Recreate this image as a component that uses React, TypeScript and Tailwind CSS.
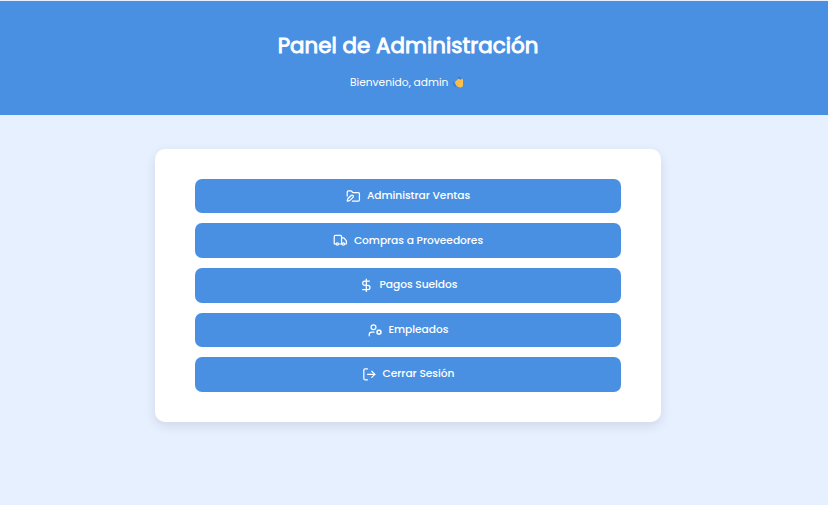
import { DollarSign, FolderPen, LogOut, Truck, UserCog, type LucideIcon } from 'lucide-react';

type Action = { label: string; icon: LucideIcon };

const actions: Action[] = [
  { label: 'Administrar Ventas', icon: FolderPen },
  { label: 'Compras a Proveedores', icon: Truck },
  { label: 'Pagos Sueldos', icon: DollarSign },
  { label: 'Empleados', icon: UserCog },
  { label: 'Cerrar Sesión', icon: LogOut },
];

function WavingHand() {
  return (
    <svg className="h-[11px] w-[11px] shrink-0" viewBox="0 0 22 22" fill="none">
      <path d="M1 11c0 4 1 6 5 8M10 1.500c3-1 5 0 6 2" stroke="#376fae" strokeWidth="2" />
      <path
        d="M4 10 8 6l3-2.500 4 2.500 3-3 2 3v10c0 3-2 5-5 5-4 0-8-3-10-7Z"
        fill="#ffc04a"
      />
      <path d="m6 11 5 5m-2-9 5 6" stroke="#ee9f38" strokeWidth="1.3" />
    </svg>
  );
}

export default function App() {
  return (
    <div className="min-h-screen bg-[#e6f0ff] pt-px font-[Poppins,Inter,sans-serif] text-white">
      <header className="flex h-[114px] flex-col items-center bg-[#4a90e2] pr-3 pt-[27px]">
        <h1 className="whitespace-nowrap text-[21.33px] font-normal leading-[35px] tracking-[0.05px] [-webkit-text-stroke:0.9px_white]">
          Panel de Administración
        </h1>
        <p className="mt-[11px] flex w-[116px] items-center gap-[5px] whitespace-nowrap text-[10.67px] leading-[17px]">
          <span>Bienvenido, admin</span>
          <WavingHand />
        </p>
      </header>
      <main className="flex justify-center pr-3 pt-[34px]">
        <nav className="flex h-[273px] w-[506px] flex-col gap-2.5 rounded-[10px] bg-white px-10 pb-[30.1px] pt-[29.8px] shadow-[0_4px_12px_rgba(0,0,0,0.1)]">
          {actions.map(({ label, icon: Icon }) => (
            <button
              key={label}
              className="flex flex-1 items-center justify-center gap-[6.3px] rounded-[7px] bg-[#4a90e2] pb-[0.3px] text-[10.67px] font-medium leading-[16px] tracking-[-0.04px]"
            >
              <Icon size={14.67} strokeWidth={2} />
              <span className="whitespace-nowrap">{label}</span>
            </button>
          ))}
        </nav>
      </main>
    </div>
  );
}
